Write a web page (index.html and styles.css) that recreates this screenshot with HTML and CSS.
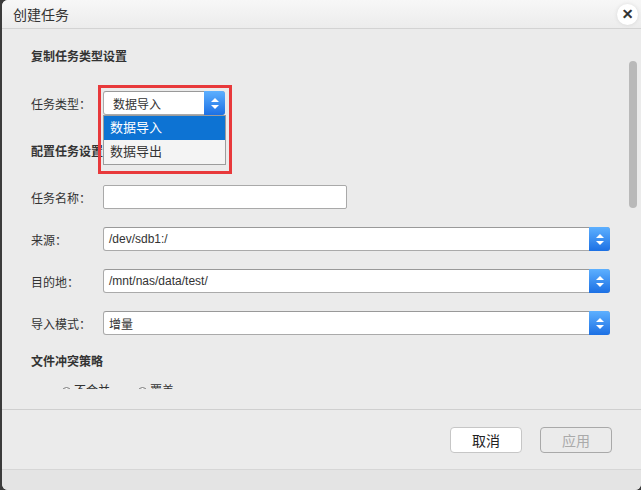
FILE: index.html
```html
<!DOCTYPE html>
<html lang="zh-CN">
<head>
<meta charset="utf-8">
<title>创建任务</title>
<link rel="stylesheet" href="styles.css">
</head>
<body>
<div class="dialog">
  <div class="titlebar">
    <span class="title">创建任务</span>
    <span class="close">✕</span>
  </div>
  <div class="scroll">
    <h3 class="section first">复制任务类型设置</h3>
    <div class="row row-type">
      <label class="label">任务类型：</label>
      <div class="select small">
        <span class="value">数据导入</span>
        <span class="spin"><i class="up"></i><i class="down"></i></span>
        <ul class="menu">
          <li class="active">数据导入</li>
          <li>数据导出</li>
        </ul>
        <div class="highlight"></div>
      </div>
    </div>
    <h3 class="section second">配置任务设置</h3>
    <div class="row row-name">
      <label class="label">任务名称：</label>
      <div class="input"></div>
    </div>
    <div class="row">
      <label class="label">来源：</label>
      <div class="select wide">
        <span class="value latin">/dev/sdb1:/</span>
        <span class="spin"><i class="up"></i><i class="down"></i></span>
      </div>
    </div>
    <div class="row">
      <label class="label">目的地：</label>
      <div class="select wide">
        <span class="value latin">/mnt/nas/data/test/</span>
        <span class="spin"><i class="up"></i><i class="down"></i></span>
      </div>
    </div>
    <div class="row">
      <label class="label">导入模式：</label>
      <div class="select wide">
        <span class="value">增量</span>
        <span class="spin"><i class="up"></i><i class="down"></i></span>
      </div>
    </div>
    <h3 class="section third">文件冲突策略</h3>
    <div class="radios">
      <span class="radio"><i class="dot"></i>不合并</span>
      <span class="radio"><i class="dot"></i>覆盖</span>
    </div>
  </div>
  <div class="thumb"></div>
  <div class="footer">
    <button class="btn">取消</button>
    <button class="btn disabled">应用</button>
  </div>
  <div class="bottom-strip"></div>
</div>
</body>
</html>
```

FILE: styles.css
```css
html, body {
  margin: 0;
  padding: 0;
}
body {
  width: 641px;
  height: 490px;
  overflow: hidden;
  background: #3b3b3b;
  font-family: "Liberation Sans", "Noto Sans CJK SC", sans-serif;
  font-size: 12px;
  color: #333;
}
.dialog {
  position: relative;
  margin-left: 2px;
  width: 639px;
  height: 490px;
  background: #ebebeb;
  border-radius: 6px 0 6px 6px;
  overflow: hidden;
  display: flex;
  flex-direction: column;
}
.titlebar {
  height: 28px;
  flex: none;
  border-bottom: 1px solid #d3d3d3;
  background: linear-gradient(#f7f7f7, #ececec);
  display: flex;
  align-items: center;
  justify-content: space-between;
  padding: 0 3px 0 11px;
}
.title {
  font-size: 14px;
  color: #333;
}
.close {
  width: 21px;
  height: 21px;
  border-radius: 50%;
  background: #fff;
  box-shadow: 0 0 4px rgba(0,0,0,0.10);
  display: flex;
  align-items: center;
  justify-content: center;
  font-size: 14px;
  font-weight: bold;
  color: #2a2a2a;
  font-family: "DejaVu Sans", sans-serif;
  -webkit-text-stroke: 0.6px #2a2a2a;
}
.scroll {
  height: 360px;
  flex: none;
  overflow: hidden;
  padding-left: 29px;
}
.section {
  margin: 0;
  font-size: 12px;
  font-weight: bold;
  line-height: 20px;
  color: #333;
}
.section.first { margin-top: 18px; }
.section.second { margin-top: 27px; }
.section.third { margin-top: 17px; }
.row {
  display: flex;
  align-items: center;
  height: 24px;
  margin-top: 18px;
}
.row-type { margin-top: 24px; }
.row-name { margin-top: 23px; }
.label {
  width: 72px;
  flex: none;
  color: #333;
}
.input {
  width: 242px;
  height: 22px;
  background: #fff;
  border: 1px solid #a9a9a9;
  border-radius: 2px;
}
.select {
  position: relative;
  height: 22px;
  background: #fff;
  border: 1px solid #aaa;
  border-top-color: #999;
  border-radius: 3px;
  display: flex;
  align-items: center;
  box-sizing: content-box;
}
.select.small { width: 120px; }
.select.wide { width: 505px; }
.value {
  flex: 1;
  padding-left: 9px;
  font-size: 12px;
  color: #333;
}
.value.latin { padding-left: 5px; }
.select.wide .value { padding-left: 5px; }
.spin {
  width: 21px;
  height: 24px;
  margin: -1px -1px -1px 0;
  border-radius: 0 3px 3px 0;
  background: linear-gradient(#5db0ff, #1c70e4);
  display: flex;
  flex-direction: column;
  align-items: center;
  justify-content: center;
  gap: 3px;
}
.spin i {
  display: block;
  width: 0;
  height: 0;
  border-left: 4px solid transparent;
  border-right: 4px solid transparent;
}
.spin .up { border-bottom: 4px solid #fff; }
.spin .down { border-top: 4px solid #fff; }
.menu {
  position: absolute;
  left: -1px;
  top: 23px;
  width: 121px;
  margin: 0;
  padding: 0;
  list-style: none;
  background: #f4f4f4;
  border: 1px solid #9c9c9c;
  z-index: 2;
}
.menu li {
  height: 24px;
  line-height: 24px;
  padding-left: 6px;
  font-size: 13px;
  color: #333;
}
.menu li.active {
  background: #0d73d3;
  color: #fff;
}
.highlight {
  position: absolute;
  left: -6px;
  top: -7px;
  width: 128px;
  height: 83px;
  border: 3px solid #e8393b;
  z-index: 3;
}
.radios {
  margin-top: 9px;
  margin-left: 31px;
  display: flex;
  gap: 28px;
  line-height: 20px;
}
.radio {
  display: flex;
  align-items: center;
  gap: 3px;
  color: #333;
}
.dot {
  width: 7px;
  height: 7px;
  border: 1px solid #777;
  border-radius: 50%;
  background: #fff;
}
.thumb {
  position: absolute;
  left: 627px;
  top: 61px;
  width: 8px;
  height: 147px;
  border-radius: 4px;
  background: #b9b9b9;
}
.footer {
  margin-top: 20px;
  flex: none;
  border-top: 1px solid #cfcfcf;
  display: flex;
  justify-content: flex-end;
  align-items: flex-start;
  gap: 18px;
  padding: 17px 29px 0 0;
  box-sizing: border-box;
  height: 60px;
}
.btn {
  width: 72px;
  height: 26px;
  border: 1px solid #c6c6c6;
  border-radius: 4px;
  background: #fff;
  font-family: "Liberation Sans", "Noto Sans CJK SC", sans-serif;
  font-size: 14px;
  color: #222;
  padding: 0;
}
.btn.disabled {
  background: transparent;
  border-color: #a9a9a9;
  color: #aaa;
}
.bottom-strip {
  flex: 1;
  border-top: 1px solid #d6d6d6;
  background: #e4e4e4;
}
```
